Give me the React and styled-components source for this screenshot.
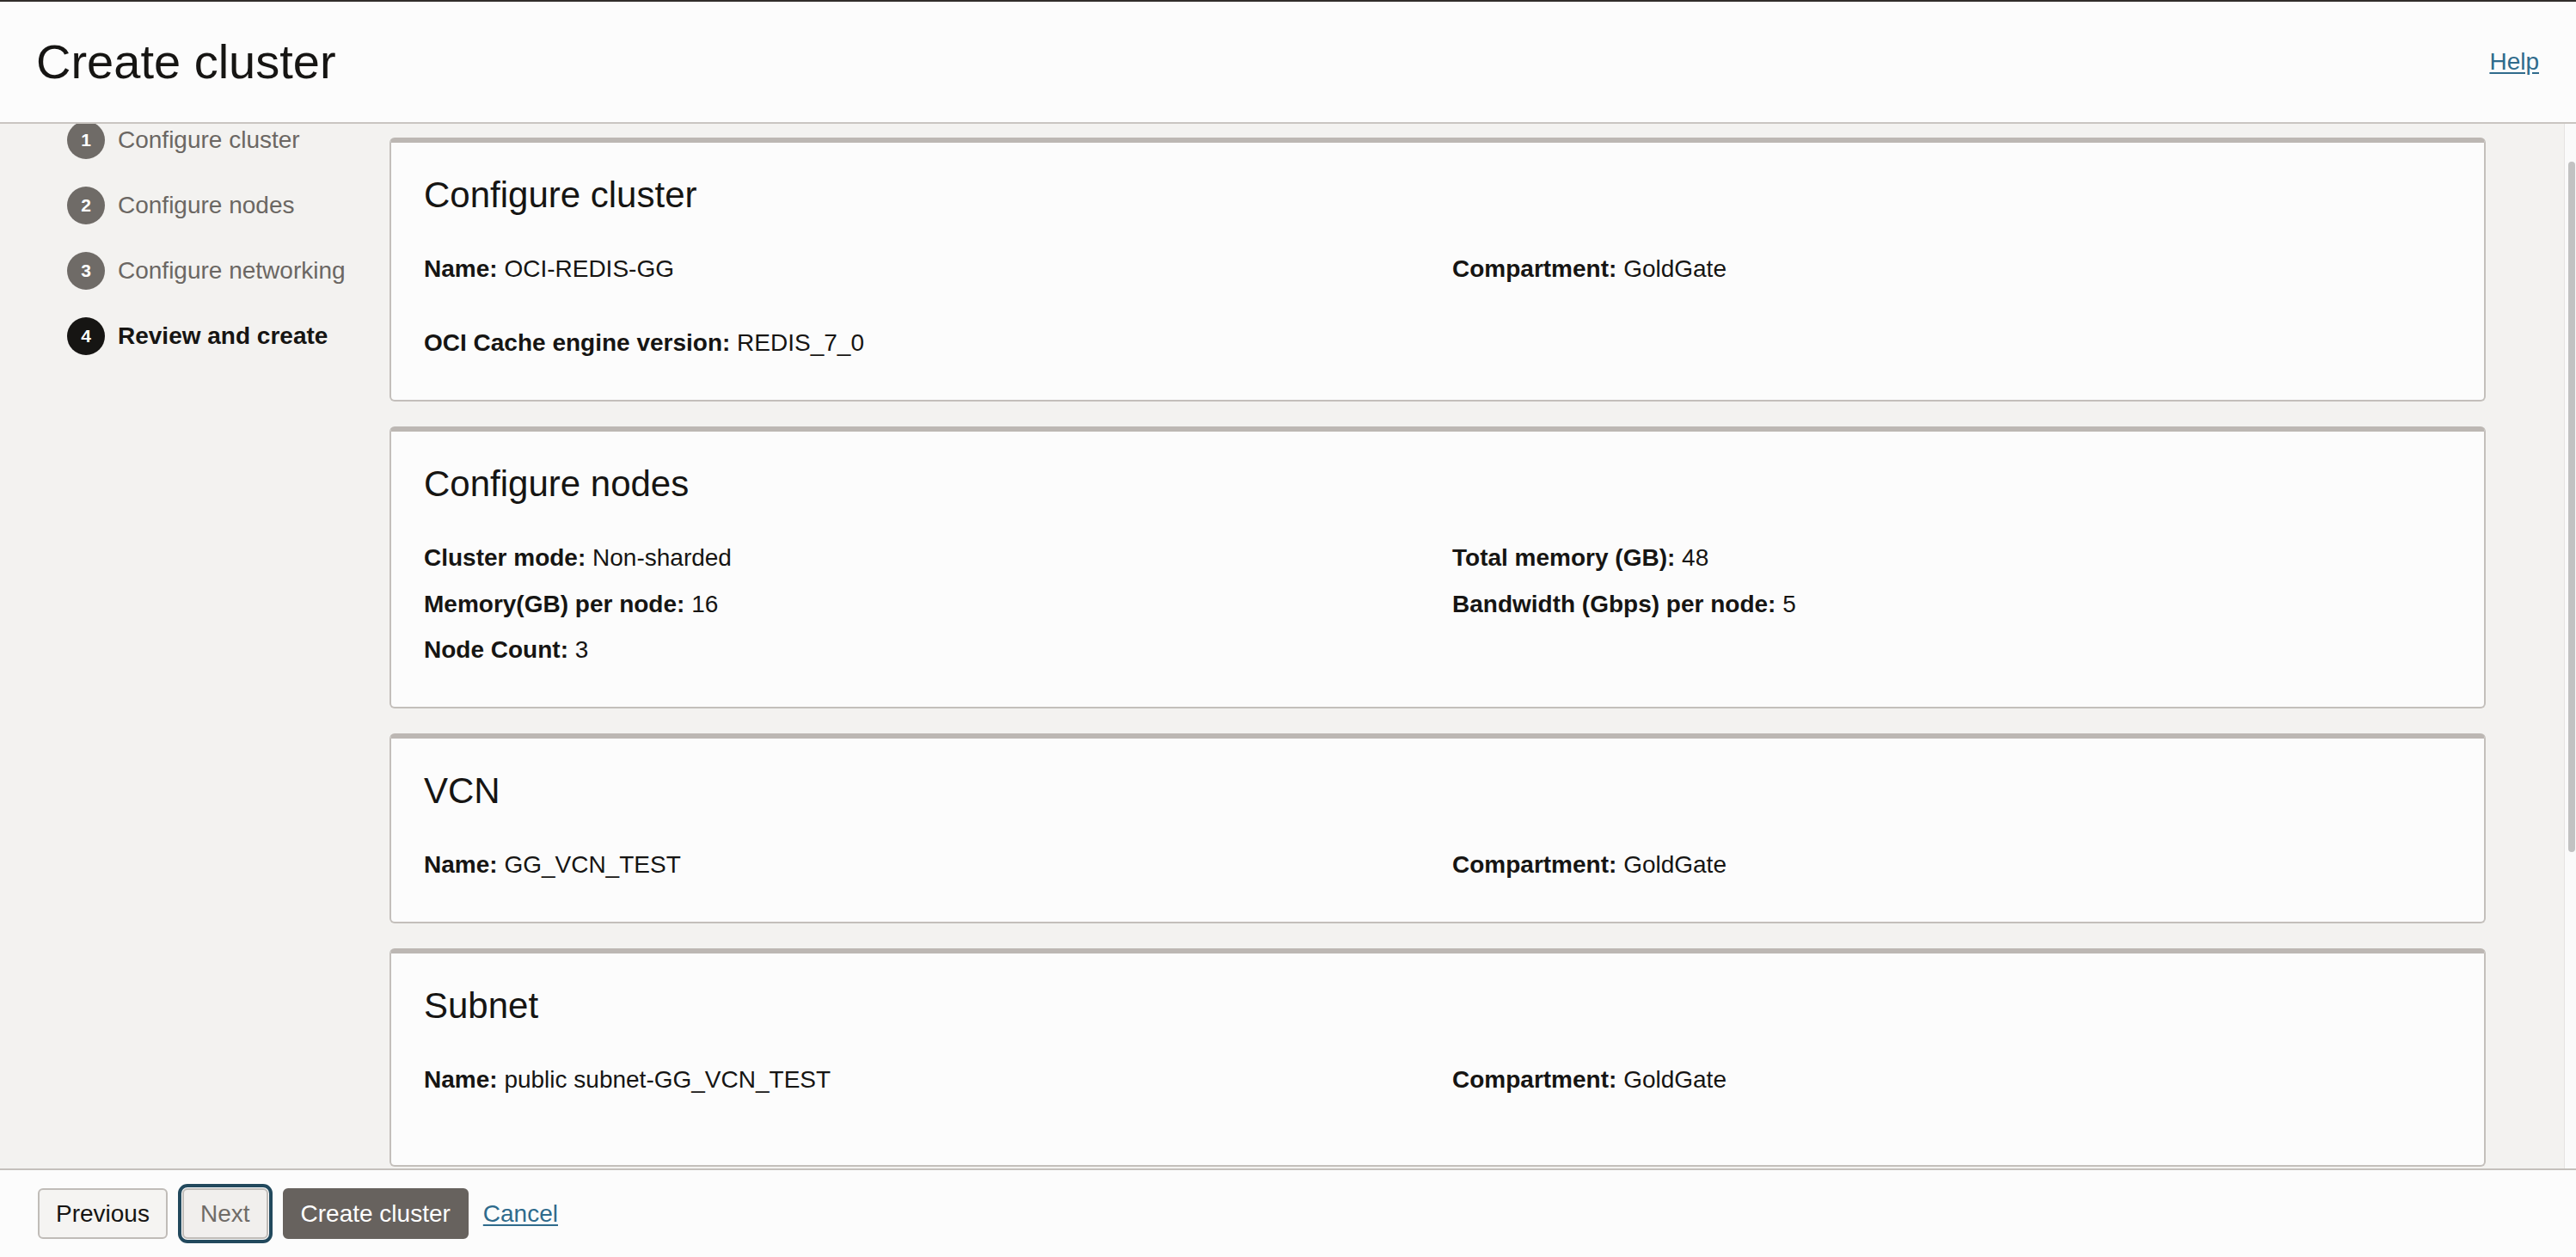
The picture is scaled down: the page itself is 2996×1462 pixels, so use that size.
import styled, { createGlobalStyle } from "styled-components";

const GlobalStyle = createGlobalStyle`
  html, body {
    margin: 0;
    padding: 0;
    height: 100%;
    overflow: hidden;
  }
  body {
    font-family: "Liberation Sans", Arial, Helvetica, sans-serif;
    color: #161513;
    background-color: #fcfcfc;
  }
  #root {
    height: 100%;
  }
`;

const Page = styled.div`
  height: 100vh;
  display: flex;
  flex-direction: column;
`;

const Header = styled.header`
  flex: none;
  height: 140px;
  display: flex;
  align-items: center;
  justify-content: space-between;
  padding: 0 43px 0 42px;
  background-color: #fcfcfc;
  border-top: 2px solid #312d2a;
  border-bottom: 2px solid #c9c5c1;
`;

const PageTitle = styled.h1`
  margin: 0;
  font-size: 56px;
  font-weight: 400;
  line-height: 1.2;
  color: #161513;
`;

const TextLink = styled.a`
  font-size: 28px;
  color: #2f6b8c;
  text-decoration: underline;
  text-underline-offset: 3px;
  cursor: pointer;
`;

const Body = styled.div`
  flex: 1;
  min-height: 0;
  display: flex;
  background-color: #f3f2f0;
  overflow: hidden;
`;

const Sidebar = styled.nav`
  flex: none;
  width: 453px;
`;

const StepList = styled.ol`
  list-style: none;
  margin: -19px 0 0 0;
  padding: 0 0 0 78px;
`;

const Step = styled.li`
  height: 76px;
  display: flex;
  align-items: center;
  gap: 15px;
`;

const StepNumber = styled.span`
  flex: none;
  width: 44px;
  height: 44px;
  border-radius: 50%;
  display: flex;
  align-items: center;
  justify-content: center;
  font-size: 21px;
  font-weight: 700;
  color: #ffffff;
  background-color: ${(p) => (p.$active ? "#161513" : "#6f6b67")};
`;

const StepLabel = styled.span`
  font-size: 28px;
  font-weight: ${(p) => (p.$active ? 700 : 400)};
  color: ${(p) => (p.$active ? "#161513" : "#6b6763")};
`;

const Main = styled.main`
  flex: 1;
  min-width: 0;
  display: flex;
  flex-direction: column;
  gap: 29px;
  padding: 16px 91px 0 0;
`;

const Card = styled.section`
  flex: none;
  background-color: #fcfcfc;
  border: 2px solid #c3bfbb;
  border-top: 6px solid #bcb7b3;
  border-radius: 6px;
  padding: 36px 38px ${(p) => p.$bottom || 48}px;
`;

const CardTitle = styled.h2`
  margin: 0 0 43px 0;
  font-size: 42px;
  font-weight: 400;
  line-height: 50px;
  color: #161513;
`;

const FieldGrid = styled.div`
  display: grid;
  grid-template-columns: 1fr 1fr;
  column-gap: 34px;
  row-gap: ${(p) => p.$rowGap || 17.5}px;
`;

const Field = styled.div`
  font-size: 28px;
  line-height: 36px;
  color: #161513;
  white-space: nowrap;
`;

const FieldLabel = styled.b`
  font-weight: 700;
`;

const ScrollTrack = styled.div`
  flex: none;
  width: 13px;
  background-color: #fafafa;
  border-left: 1px solid #e6e4e2;
  padding-top: 44px;
`;

const ScrollThumb = styled.div`
  width: 8px;
  height: 803px;
  margin-left: 4px;
  border-radius: 4px;
  background-color: #c2c2c2;
`;

const Footer = styled.footer`
  flex: none;
  height: 101px;
  display: flex;
  align-items: center;
  gap: 17px;
  padding-left: 44px;
  background-color: #fcfcfc;
  border-top: 2px solid #c4c0bc;
`;

const Button = styled.button`
  height: 59px;
  padding: 0 19px;
  border-radius: 6px;
  border: 2px solid ${(p) => (p.$primary ? "#67625e" : "#c0bcb8")};
  background-color: ${(p) =>
    p.$primary ? "#67625e" : p.$disabled ? "#f1efed" : "#f5f4f2"};
  color: ${(p) =>
    p.$primary ? "#ffffff" : p.$disabled ? "#6f6b67" : "#161513"};
  font-family: "Liberation Sans", Arial, Helvetica, sans-serif;
  font-size: 28px;
  cursor: pointer;
  outline: ${(p) => (p.$focused ? "4px solid #22495d" : "none")};
  outline-offset: 1px;
`;

const steps = [
  "Configure cluster",
  "Configure nodes",
  "Configure networking",
  "Review and create",
];

const sections = [
  {
    title: "Configure cluster",
    rowGap: 50,
    fields: [
      ["Name", "OCI-REDIS-GG"],
      ["Compartment", "GoldGate"],
      ["OCI Cache engine version", "REDIS_7_0"],
    ],
  },
  {
    title: "Configure nodes",
    fields: [
      ["Cluster mode", "Non-sharded"],
      ["Total memory (GB)", "48"],
      ["Memory(GB) per node", "16"],
      ["Bandwidth (Gbps) per node", "5"],
      ["Node Count", "3"],
    ],
  },
  {
    title: "VCN",
    fields: [
      ["Name", "GG_VCN_TEST"],
      ["Compartment", "GoldGate"],
    ],
  },
  {
    title: "Subnet",
    bottom: 81,
    fields: [
      ["Name", "public subnet-GG_VCN_TEST"],
      ["Compartment", "GoldGate"],
    ],
  },
];

function App() {
  return (
    <>
      <GlobalStyle />
      <Page>
        <Header>
          <PageTitle>Create cluster</PageTitle>
          <TextLink>Help</TextLink>
        </Header>
        <Body>
          <Sidebar>
            <StepList>
              {steps.map((label, i) => {
                const active = i === steps.length - 1;
                return (
                  <Step key={label}>
                    <StepNumber $active={active}>{i + 1}</StepNumber>
                    <StepLabel $active={active}>{label}</StepLabel>
                  </Step>
                );
              })}
            </StepList>
          </Sidebar>
          <Main>
            {sections.map((s) => (
              <Card key={s.title} $bottom={s.bottom}>
                <CardTitle>{s.title}</CardTitle>
                <FieldGrid $rowGap={s.rowGap}>
                  {s.fields.map(([label, value]) => (
                    <Field key={label}>
                      <FieldLabel>{label}:</FieldLabel> {value}
                    </Field>
                  ))}
                </FieldGrid>
              </Card>
            ))}
          </Main>
          <ScrollTrack>
            <ScrollThumb />
          </ScrollTrack>
        </Body>
        <Footer>
          <Button>Previous</Button>
          <Button $disabled $focused>
            Next
          </Button>
          <Button $primary>Create cluster</Button>
          <TextLink>Cancel</TextLink>
        </Footer>
      </Page>
    </>
  );
}

export default App;
